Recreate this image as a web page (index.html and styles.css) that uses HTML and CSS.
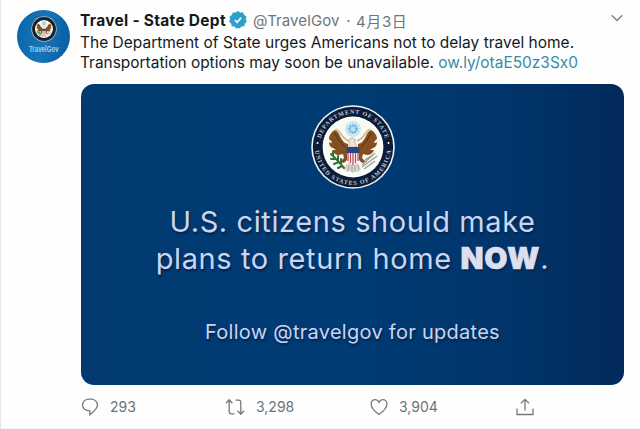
FILE: index.html
```html
<!DOCTYPE html>
<html lang="en">
<head>
<meta charset="utf-8">
<title>Travel - State Dept</title>
<link rel="stylesheet" href="styles.css">
</head>
<body>
<svg class="defs" width="0" height="0" aria-hidden="true">
  <defs>
    <path id="arc-top" d="M-33.2 0A33.2 33.2 0 0 1 33.2 0"/>
    <path id="arc-bottom" d="M-38 0A38 38 0 0 0 38 0"/>
    <g id="eagle">
      <circle r="29" fill="#fafaf5"/>
      <circle cy="-18" r="7.800" fill="#b9dff0"/>
      <circle cy="-18" r="6.300" fill="none" stroke="#eef9ff" stroke-width="1.1" stroke-dasharray="1.6 1.4"/>
      <circle cy="-18" r="3.500" fill="none" stroke="#5aa9d2" stroke-width="2" stroke-dasharray="1.5 1"/>
      <path d="M-4 15h8l4 7-3 3-3-1-2 2-3-2-3 1-4-4z" fill="#d9d4d0"/>
      <path d="M-4 18l-1 6M-1 18v7M2 18v7M5 18l1 5" stroke="#9a928c" stroke-width=".7"/>
      <path d="M-5-3Q-10-4-13-11-15-16-18-17C-22-15-24-11-24-8q3 2 3 4-2 0-3-1 0 5 4 6l3 2-4 0q2 5 7 5l4-1 1 4-4 4 4 1 4-4z" fill="#85501f"/>
      <path d="M5-3Q10-4 13-11 15-16 18-17C22-15 24-11 24-8q-3 2-3 4 2 0 3-1 0 5-4 6l-3 2 4 0q-2 5-7 5l-4-1-1 4 4 4-4 1-4-4z" fill="#85501f"/>
      <path d="M-18-14q3 8 10 14M18-14q-3 8-10 14" fill="none" stroke="#55300f" stroke-width="1"/>
      <path d="M-18-17q3-1 6 4t8 7M18-17q-3-1-6 4t-8 7" fill="none" stroke="#d3b488" stroke-width="1.5"/>
      <path d="M-4 0v-6q1-4 4-3l3 2-2 1 3 6z" fill="#eee8da" stroke="#9a7d5e" stroke-width=".5"/>
      <path d="M-22 7l7 7 6 7M-20 9v-4M-17 12l-5 0M-15 14l0-5M-14 15l-5 2M-12 17v-5M-11 19l-4 2" fill="none" stroke="#2f7139" stroke-width="2" stroke-linecap="round"/>
      <path d="M9 18l13-12M9 20l15-11M12 13l9-6M11 22l11-8" stroke="#9a9d94" stroke-width="1.2"/>
      <path d="M-6 1H6V12Q5 16 0 18-5 16-6 12z" fill="#fff"/>
      <path d="M-5 6v8M-2.500 6v10M0 6v12M2.500 6v10M5 6v8" stroke="#bf4658" stroke-width="1.300"/>
      <path d="M-6.500 0H6.500V6H-6.500z" fill="#28457f"/>
    </g>
  </defs>
</svg>
<article class="tweet">
  <div class="avatar">
    <svg class="avatar-seal" viewBox="-42 -42 84 84"><circle r="41" fill="#aebfca"/><circle r="38.500" fill="#17212c"/><use href="#eagle"/></svg>
    <span class="avatar-name">TravelGov</span>
  </div>
  <div class="content">
    <header class="head">
      <span class="name">Travel - State Dept</span>
      <svg class="badge" viewBox="0 0 18 18"><path d="M9 0l2.3 1.5 2.8-.1 1 2.6 2.4 1.5-.7 2.7 1.1 2.5-2.1 1.8-.5 2.8-2.8.3L10.600 17.600 9 16.900l-1.600.7-1.900-2-2.800-.3-.5-2.800L.1 10.700l1.100-2.500-.7-2.700L2.900 4l1-2.600 2.800.1z" fill="#2c9fcb"/><path d="M5.800 9l2.300 2.300 4-4.600" fill="none" stroke="#fff" stroke-width="1.500"/></svg>
      <span class="handle">@TravelGov</span><span class="dot">·</span><span class="date">4月3日</span>
      <svg class="chevron" viewBox="0 0 12 8"><path d="M.7 1.200L6 6.500l5.300-5.300" fill="none" stroke="#76838b" stroke-width="1.300"/></svg>
    </header>
    <p class="line line-one">The Department of State urges Americans not to delay travel home.</p>
    <p class="line line-two">Transportation options may soon be unavailable. <a class="link">ow.ly/otaE50z3Sx0</a></p>
    <section class="card">
      <svg class="seal" viewBox="-42 -42 84 84">
        <circle r="41.800" fill="#f2f5f4"/><circle r="40.200" fill="#0b1d3a"/><circle r="30.400" fill="#fff"/>
        <use href="#eagle"/>
        <text class="seal-text"><textPath href="#arc-top" startOffset="50%" text-anchor="middle" textLength="87">DEPARTMENT OF STATE</textPath></text>
        <text class="seal-text"><textPath href="#arc-bottom" startOffset="50%" text-anchor="middle" textLength="112">UNITED STATES OF AMERICA</textPath></text>
        <circle cx="-35.500" cy="-4" r="1" fill="#fff"/><circle cx="35.500" cy="-4" r="1" fill="#fff"/>
      </svg>
      <p class="slogan slogan-one">U.S. citizens should make</p>
      <p class="slogan slogan-two">plans to return home <b>NOW</b>.</p>
      <p class="follow">Follow @travelgov for updates</p>
    </section>
    <footer class="actions">
      <div class="action"><svg class="icon" viewBox="0 0 18 18"><path d="M8 1.200h2c3.700 0 6.500 2.500 6.500 5.800 0 4.200-4.200 7-7.700 9.700v-3.900C4.600 13 1.500 10.600 1.500 7c0-3.300 2.800-5.800 6.500-5.800z"/></svg><span>293</span></div>
      <div class="action"><svg class="icon icon-retweet" viewBox="0 0 20 18"><path d="M1 5.200l3.200-3.400 3.200 3.400M4.200 2.200v11.500c0 1.300.8 2.100 2.100 2.100h3.200M19 12.800l-3.200 3.400-3.200-3.400M15.800 15.800V4.300c0-1.300-.8-2.100-2.100-2.100h-3.200"/></svg><span>3,298</span></div>
      <div class="action"><svg class="icon" viewBox="0 0 18 18"><path d="M9 16.500C5 13.800 1.100 9.800 1.100 6.100c0-2.500 1.700-4.400 3.900-4.400 1.800 0 3.200 1.100 4 2.700.8-1.600 2.200-2.700 4-2.700 2.200 0 3.900 1.900 3.900 4.400 0 3.700-3.900 7.700-7.900 10.400z"/></svg><span>3,904</span></div>
      <div class="action"><svg class="icon" viewBox="0 0 18 18"><path d="M1 10.500v6h16v-6M9 12.500V1.300M5 5.300l4-4 4 4"/></svg></div>
    </footer>
  </div>
</article>
</body>
</html>
```
FILE: styles.css
```css
* { box-sizing: border-box; }
body { margin: 0; background: #fefefe; font-family: Inter, "Noto Sans CJK SC", sans-serif; color: #15191c; }
p { margin: 0; }
.defs { position: absolute; }
.tweet { display: flex; width: 640px; height: 429px; padding: 10px 15px 0 16px; border-left: 1px solid #e3e8eb; border-bottom: 1px solid #eef1f2; }
.avatar { flex: none; width: 53px; height: 53px; margin-right: 10px; border-radius: 50%; background: linear-gradient(100deg, #0865a8, #1675b8 50%, #065a9c); display: flex; flex-direction: column; align-items: center; padding-top: 6px; }
.avatar-seal { width: 26px; height: 26px; flex: none; }
.avatar-name { font: 700 9px/11px "Liberation Sans", sans-serif; color: #a0d2ee; transform: scaleX(.68); margin-top: 2px; }
.content { width: 545px; flex: none; }
.head { display: flex; align-items: center; height: 20px; white-space: nowrap; }
.name { width: 146px; font-weight: 700; font-size: 15.5px; letter-spacing: .28px; }
.badge { width: 18px; height: 18px; margin: 0 6px 0 3px; }
.handle, .dot, .date { color: #6b7780; font-size: 15px; }
.handle { width: 88px; letter-spacing: .1px; }
.dot { width: 15px; text-align: center; }
.date { letter-spacing: .6px; }
.chevron { width: 12px; height: 8px; margin: -4px 2px 0 auto; }
.line { font-size: 15.5px; line-height: 20px; white-space: nowrap; }
.line-one { margin-top: 3px; }
.line-two { font-size: 15.45px; }
.link { color: #358da6; }
.card { width: 543px; height: 301px; margin: 11px 0 0 1px; border-radius: 13px; background: linear-gradient(90deg, #023a70 0, #003b74 50%, #01356b 78%, #022a5b 100%); display: flex; flex-direction: column; align-items: center; padding-top: 21px; color: #c9d5f4; white-space: nowrap; text-shadow: 1px 2px 2px #032448; }
.seal { width: 84px; height: 84px; flex: none; }
.seal-text { font: 700 6px "Liberation Serif", serif; fill: #c4ccd6; text-shadow: none; }
.slogan { font-size: 29px; line-height: 38px; letter-spacing: .6px; }
.slogan-one { margin-top: 14px; }
.slogan-two { margin-top: -1px; }
.slogan b { font-weight: 900; font-size: 30px; line-height: 1; letter-spacing: .8px; color: #dcdff0; -webkit-text-stroke: .6px #dcdff0; }
.follow { font-size: 20px; line-height: 26px; letter-spacing: .28px; margin-top: 41px; }
.actions { display: grid; grid-template-columns: 144px 145px 146px 1fr; height: 43px; padding-left: 1px; color: #6b7379; font-size: 14px; }
.action { display: flex; align-items: center; gap: 11px; }
.icon { width: 18px; height: 18px; fill: none; stroke: #727a80; stroke-width: 1.3; }
.icon-retweet { width: 20px; }
```
